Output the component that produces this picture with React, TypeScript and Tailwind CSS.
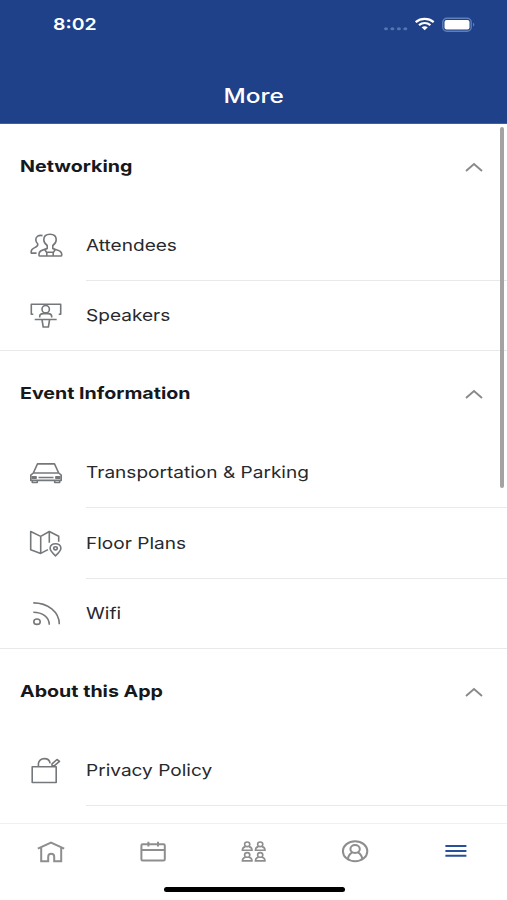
import { useState, type ReactNode } from 'react'
import { clsx } from 'clsx'

const ICONS: Record<string, ReactNode> = {
  attendees: (
    <>
      <path d="M19.200 18.500c-2.200-1.500-3.400-3.500-3.400-5.700 0-3.500 2.600-5.500 6.200-5.500s6.200 2 6.200 5.500c0 2.200-1.200 4.200-3.400 5.700v3c2 1.300 8.700 1 8.900 5.500v1.200c0 .6-.4.800-1 .8H11.800c-.5 0-.8-.2-.8-.8V27c.2-4.500 6.200-4.200 8.200-5.500z" />
      <path d="M16.700 22.500l1.800 2.700h7l1.800-2.700M18.800 29v-3.800M25.200 29v-3.800" />
      <path d="M14.500 8.600c-3.800-.9-6.900 1-6.700 4.400.1 1.500.8 2.900 2 4 .5 4.500-6.600 2.700-6.600 7.500v1.600h5.400" />
    </>
  ),
  speakers: (
    <>
      <path d="M5.300 17.300H3.300V7.200h29.400v10.100h-2" />
      <circle cx="17.700" cy="12.200" r="3.700" />
      <path d="M11.700 20.500v-1c0-1.700 1.500-2.900 3.500-2.900h5c2 0 3.500 1.200 3.500 2.900v1M6.700 22.500h22M14 22.500l1.200 7.500h5.200l1.200-7.500" />
    </>
  ),
  car: (
    <>
      <path d="M5.300 19l4.200-9.100h17l4.200 9.100M5.300 19h25.400l2.500 2.200v5.200H2.800v-5.200z" />
      <path d="M4.300 26.500v2h5v-2M26.700 26.500v2h5v-2M3.500 22.700h4.600v1.500H3.500M32.500 22.700h-4.600v1.500h4.600M10.500 23.500h15" />
    </>
  ),
  map: (
    <>
      <path d="M20 24.600l-7.300 3.800-10-3.700V6.500l10 4.900 8.600-4.900 9.400 4.800v5.400M12.700 11.400v17M21.300 6.500v11.300" />
      <path d="M27.500 30.800c-3-2.800-5.400-4.900-5.400-7.500 0-2.800 2.400-4.600 5.400-4.600s5.400 1.800 5.400 4.600c0 2.600-2.400 4.700-5.400 7.500z" />
      <ellipse cx="27.500" cy="23.300" rx="1.800" ry="1.600" />
    </>
  ),
  wifi: (
    <>
      <ellipse cx="9" cy="26.700" rx="3.200" ry="2.700" />
      <path d="M5.300 17.200c9 0 16 5 16 12.500M5.300 7.900c14.500 0 26 9 26 21.300" />
    </>
  ),
  privacy: (
    <>
      <path d="M4.200 14.700h24v15.800h-24zM10.400 14.700v-2.500c0-3.400 2.600-5.600 5.900-5.600 3.200 0 5.400 2 5.800 4.700" />
      <path d="M24 11.900l5-4.400 2.500 1.800-5 4.400H24z" />
    </>
  ),
}

const SECTIONS = [
  {
    title: 'Networking',
    items: [
      { icon: 'attendees', label: 'Attendees' },
      { icon: 'speakers', label: 'Speakers' },
    ],
  },
  {
    title: 'Event Information',
    items: [
      { icon: 'car', label: 'Transportation & Parking' },
      { icon: 'map', label: 'Floor Plans' },
      { icon: 'wifi', label: 'Wifi' },
    ],
  },
  {
    title: 'About this App',
    items: [{ icon: 'privacy', label: 'Privacy Policy' }],
  },
]

const TABS: { name: string; icon: ReactNode }[] = [
  {
    name: 'home',
    icon: <path d="M2.800 11.600L16 5.500l13.200 6.100M6.200 10.300v14h7v-4.600c0-1.900 1.300-2.900 3-2.900s3 1 3 2.900v4.600h7v-14" />,
  },
  {
    name: 'agenda',
    icon: (
      <>
        <rect x="5.400" y="7.300" width="23.400" height="16.200" rx="1.200" />
        <path d="M5.400 13.100h23.400M12.400 4.700v4.800M22 4.700v4.800" />
      </>
    ),
  },
  {
    name: 'groups',
    icon: (
      <>
        <Person x={10.2} y={7.3} />
        <Person x={23.2} y={7.3} />
        <Person x={10.2} y={17.9} />
        <Person x={23.2} y={17.9} />
      </>
    ),
  },
  {
    name: 'profile',
    icon: (
      <>
        <ellipse cx="16.100" cy="14.200" rx="12.200" ry="10" />
        <ellipse cx="16.100" cy="12" rx="4.700" ry="3.900" />
        <path d="M8.900 22.200c.4-3.500 2-5.500 4.500-6.800M23.300 22.200c-.4-3.500-2-5.500-4.500-6.800" />
      </>
    ),
  },
  {
    name: 'more',
    icon: <path d="M5.400 9h21M5.400 14h21M5.400 18.800h21" />,
  },
]

function Person({ x, y }: { x: number; y: number }) {
  return (
    <g transform={`translate(${x} ${y})`} strokeWidth="1.600">
      <ellipse rx="2.600" ry="2.300" />
      <path d="M-1.800 2.300c-2 .5-3 1.500-3 3.700h9.600c0-2.200-1-3.200-3-3.700" />
    </g>
  )
}

function StatusBar() {
  return (
    <div className="flex h-12 items-center justify-between pl-[53px] pr-8">
      <span className="inline-block origin-left scale-x-[1.18] pt-px text-[16.500px] font-semibold">8:02</span>
      <svg width="92" height="20" viewBox="0 0 92 20" fill="none">
        <g fill="#5575b0">
          <ellipse cx="3" cy="14.700" rx="2" ry="1.500" />
          <ellipse cx="9.400" cy="14.700" rx="2" ry="1.500" />
          <ellipse cx="15.900" cy="14.700" rx="2" ry="1.500" />
          <ellipse cx="22.300" cy="14.700" rx="2" ry="1.500" />
        </g>
        <g stroke="#fff" strokeWidth="2.300">
          <path d="M32.700 8.100c5.200-4.200 12.800-4.200 18 0M36 11.200c3.400-2.700 8-2.700 11.400 0" />
        </g>
        <path d="M38.600 13.200c1.900-1.400 4.300-1.400 6.200 0l-3.100 3.100z" fill="#fff" />
        <rect x="59.800" y="4.200" width="28.400" height="13" rx="4" stroke="#5f7fb8" strokeWidth="1.400" />
        <rect x="61.500" y="6" width="25" height="9.400" rx="2" fill="#fff" />
        <path d="M90 8.800c1.800.5 1.800 3.300 0 3.800z" fill="#5f7fb8" />
      </svg>
    </div>
  )
}

function Section({ title, items }: (typeof SECTIONS)[number]) {
  const [open, setOpen] = useState(true)

  return (
    <section className="group/section shrink-0 border-b border-[#e9e9e9] last:border-b-0">
      <button
        onClick={() => setOpen(!open)}
        className="flex h-[86px] w-full items-center justify-between pb-px pl-5 pr-6 text-left"
      >
        <span className="inline-block origin-left scale-x-[1.19] text-[16.500px] font-bold text-[#16181b]">
          {title}
        </span>
        <svg
          width="18"
          height="12"
          viewBox="0 0 18 12"
          fill="none"
          stroke="#8a8a8a"
          strokeWidth="1.900"
          className={clsx(!open && 'rotate-180')}
        >
          <path d="M1 10l8-7 8 7" />
        </svg>
      </button>
      {open &&
        items.map((item) => (
          <div
            key={item.label}
            className="group/row flex h-[71px] items-center pl-7 last:h-[69px] group-last/section:last:h-[71px]"
          >
            <svg
              width="36"
              height="36"
              viewBox="0 0 36 36"
              fill="none"
              stroke="#75787b"
              strokeWidth="1.600"
              strokeLinejoin="round"
              className="mb-0.5 shrink-0"
            >
              {ICONS[item.icon]}
            </svg>
            <div
              className={clsx(
                'ml-[22px] flex h-full flex-1 items-center border-b border-[#e9e9e9]',
                'group-last/row:border-b-0 group-last/section:group-last/row:border-b',
              )}
            >
              <span className="inline-block origin-left scale-x-[1.155] whitespace-nowrap text-[16.500px] text-[#27292c]">
                {item.label}
              </span>
            </div>
          </div>
        ))}
    </section>
  )
}

export default function App() {
  const [tab, setTab] = useState('more')

  return (
    <div className="relative flex h-[900px] w-[507px] flex-col overflow-hidden bg-white font-['Inter',sans-serif]">
      <header className="h-[124px] shrink-0 border-b border-[#3f5f9e] bg-[#1e4189] text-white">
        <StatusBar />
        <h1 className="flex h-[75px] items-center justify-center pl-px pt-[20px] text-[20px] font-medium">
          <span className="inline-block scale-x-[1.22]">More</span>
        </h1>
      </header>

      <main className="flex min-h-0 flex-1 flex-col overflow-hidden">
        {SECTIONS.map((section) => (
          <Section key={section.title} {...section} />
        ))}
      </main>
      <div className="absolute right-[3px] top-[127px] h-[361px] w-1 rounded-full bg-[#a3a3a3]" />

      <nav className="h-[77px] shrink-0 border-t border-[#f0f0f0] bg-white">
        <div className="grid h-[54px] grid-cols-5">
          {TABS.map(({ name, icon }) => (
            <button
              key={name}
              aria-label={name}
              onClick={() => setTab(name)}
              className={clsx('flex items-center justify-center', tab === name ? 'text-[#28509a]' : 'text-[#8e8e8e]')}
            >
              <svg width="32" height="28" viewBox="0 0 32 28" fill="none" stroke="currentColor" strokeWidth="2">
                {icon}
              </svg>
            </button>
          ))}
        </div>
        <div className="ml-[164px] mt-[9px] h-[5px] w-[181px] rounded-full bg-black" />
      </nav>
    </div>
  )
}
